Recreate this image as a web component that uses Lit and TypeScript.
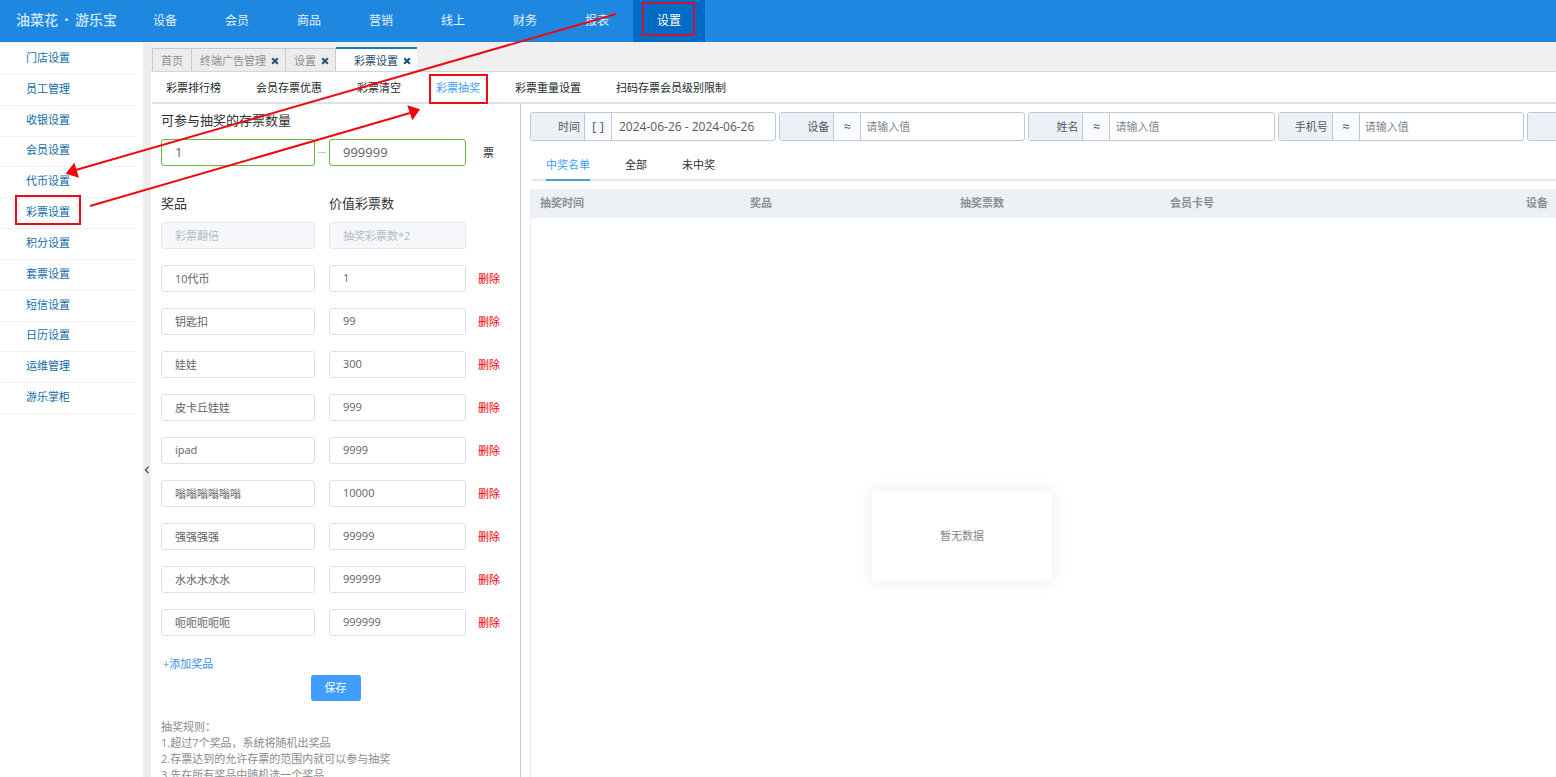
import { LitElement, html, css, svg, nothing } from "lit";
import { customElement, state } from "lit/decorators.js";
import { classMap } from "lit/directives/class-map.js";

const NAV = ["设备", "会员", "商品", "营销", "线上", "财务", "报表", "设置"];
const SIDE = [
  "门店设置", "员工管理", "收银设置", "会员设置", "代币设置", "彩票设置",
  "积分设置", "套票设置", "短信设置", "日历设置", "运维管理", "游乐掌柜",
];
const PAGE_TABS = ["首页", "终端广告管理", "设置", "彩票设置"];
const SUB_TABS = ["彩票排行榜", "会员存票优惠", "彩票清空", "彩票抽奖", "彩票重量设置", "扫码存票会员级别限制"];
const RESULT_TABS = ["中奖名单", "全部", "未中奖"];
const FILTERS = ["设备", "姓名", "手机号", ""];
const COLUMNS = ["抽奖时间", "奖品", "抽奖票数", "会员卡号", "设备"];
const RULES = [
  "1.超过7个奖品，系统将随机出奖品",
  "2.存票达到的允许存票的范围内就可以参与抽奖",
  "3.先在所有奖品中随机选一个奖品",
];

interface Prize {
  name: string;
  value: string;
  locked?: boolean;
}

const PRIZES: Prize[] = [
  { name: "彩票翻倍", value: "抽奖彩票数*2", locked: true },
  { name: "10代币", value: "1" },
  { name: "钥匙扣", value: "99" },
  { name: "娃娃", value: "300" },
  { name: "皮卡丘娃娃", value: "999" },
  { name: "ipad", value: "9999" },
  { name: "嗡嗡嗡嗡嗡嗡", value: "10000" },
  { name: "强强强强", value: "99999" },
  { name: "水水水水水", value: "999999" },
  { name: "呃呃呃呃呃", value: "999999" },
];

const reset = css`
  * {
    box-sizing: border-box;
  }
  button,
  input {
    font: inherit;
    color: inherit;
    margin: 0;
    padding: 0;
    border: 0;
    background: none;
    border-radius: 0;
    min-width: 0;
    outline: 0;
  }
  button {
    cursor: pointer;
    white-space: nowrap;
  }
  a {
    color: inherit;
    text-decoration: none;
  }
`;

@customElement("top-bar")
export class TopBar extends LitElement {
  static styles = [
    reset,
    css`
      :host {
        display: flex;
        height: 42px;
        background: #1e88e1;
        color: #e3f1fd;
        font-size: 12px;
        line-height: 41px;
      }
      .logo {
        width: 129px;
        padding-left: 16px;
        font-size: 14px;
        font-weight: 500;
        line-height: 40px;
        color: #d3e8fb;
        white-space: nowrap;
      }
      .dot {
        display: inline-block;
        width: 17px;
        text-align: center;
        font-weight: 800;
      }
      .nav {
        display: flex;
      }
      .item {
        width: 72px;
        text-align: center;
      }
      .current {
        background: #026bc6;
        color: #fff;
      }
    `,
  ];

  render() {
    return html`
      <div class="logo">油菜花<span class="dot">·</span>游乐宝</div>
      <nav class="nav">
        ${NAV.map(
          (n) => html`<a href="#" class=${classMap({ item: true, current: n === "设置" })}>${n}</a>`
        )}
      </nav>
    `;
  }
}

@customElement("side-menu")
export class SideMenu extends LitElement {
  static styles = [
    reset,
    css`
      :host {
        display: block;
        background: #fff;
        padding: 1px 7px 0 0;
      }
      .menu {
        display: grid;
        grid-auto-rows: 1fr;
        height: 370px;
      }
      .link {
        display: flex;
        align-items: center;
        padding: 0 0 2px 26px;
        border-bottom: 1px solid #f1f2f4;
        color: #116cab;
      }
    `,
  ];

  render() {
    return html`<nav class="menu">
      ${SIDE.map((s) => html`<a href="#" class="link">${s}</a>`)}
    </nav>`;
  }
}

@customElement("prize-form")
export class PrizeForm extends LitElement {
  @state() private prizes = PRIZES;

  static styles = [
    reset,
    css`
      :host {
        display: block;
        padding: 7px 10px 0;
        border-right: 1px solid #c6c8cc;
      }
      .title {
        font-size: 13px;
        line-height: 18px;
        color: #303133;
      }
      .row {
        display: grid;
        grid-template-columns: 154px 14px 137px 1fr;
        align-items: center;
      }
      .range {
        margin-top: 10px;
      }
      .dash {
        justify-self: center;
        width: 8px;
        height: 1px;
        background: #c8cacf;
      }
      .unit {
        padding-left: 17px;
        color: #303133;
      }
      .heads {
        margin-top: 28px;
      }
      .prizes {
        display: grid;
        gap: 16px;
        margin-top: 10px;
      }
      .box {
        width: 100%;
        height: 27px;
        padding: 0 13px 2px;
        border: 1px solid #dcdfe6;
        border-radius: 3px;
        background: #fff;
        color: #606266;
      }
      .ok {
        border-color: #67b83a;
        font-size: 13px;
      }
      .box:disabled {
        background: #f5f7fa;
        border-color: #e4e7ed;
        color: #b8bcc5;
      }
      .value {
        grid-column: 3;
      }
      .remove {
        justify-self: start;
        margin-left: 12px;
        color: #f00000;
      }
      .add {
        display: block;
        margin: 20px 0 0 2px;
        line-height: 16px;
        color: #3a8ee6;
      }
      .save {
        display: block;
        width: 50px;
        height: 26px;
        margin: 3px auto 0;
        border-radius: 3px;
        background: #409eff;
        color: #fff;
      }
      .rules {
        margin-top: 18px;
        line-height: 16px;
        color: #8b8b8b;
        white-space: nowrap;
      }
    `,
  ];

  private remove(p: Prize) {
    this.prizes = this.prizes.filter((x) => x !== p);
  }

  render() {
    return html`
      <div class="title">可参与抽奖的存票数量</div>
      <div class="row range">
        <input class="box ok" aria-label="最少票数" value="1" />
        <span class="dash"></span>
        <input class="box ok" aria-label="最多票数" value="999999" />
        <span class="unit">票</span>
      </div>
      <div class="row heads">
        <div class="title">奖品</div>
        <div class="title value">价值彩票数</div>
      </div>
      <div class="prizes">
        ${this.prizes.map(
          (p) => html`<div class="row">
            <input class="box" aria-label="奖品" .value=${p.name} ?disabled=${!!p.locked} />
            <input class="box value" aria-label="价值彩票数" .value=${p.value} ?disabled=${!!p.locked} />
            ${p.locked
              ? nothing
              : html`<button class="remove" @click=${() => this.remove(p)}>删除</button>`}
          </div>`
        )}
      </div>
      <button class="add">+添加奖品</button>
      <button class="save">保存</button>
      <div class="rules">
        <div>抽奖规则：</div>
        ${RULES.map((r) => html`<div>${r}</div>`)}
      </div>
    `;
  }
}

@customElement("draw-results")
export class DrawResults extends LitElement {
  static styles = [
    reset,
    css`
      :host {
        display: flex;
        flex-direction: column;
        min-width: 0;
        padding: 8px 0 0 9px;
        overflow: hidden;
      }
      .filters {
        display: grid;
        grid-auto-flow: column;
        grid-auto-columns: 24%;
        gap: 3px;
      }
      .field {
        display: grid;
        grid-template-columns: 54px 27px 1fr;
        height: 29px;
        line-height: 27px;
        border: 1px solid #bfc8d6;
        border-radius: 3px;
        overflow: hidden;
        color: #55585e;
      }
      .label {
        padding-right: 4px;
        text-align: right;
        background: #edf1f7;
        border-right: 1px solid #bfc8d6;
      }
      .op {
        font-size: 13px;
        line-height: 26px;
        text-align: center;
        background: #f9fafd;
        border-right: 1px solid #bfc8d6;
      }
      .entry {
        width: 100%;
        padding: 0 5px 1px;
      }
      .date {
        padding: 0 7px;
        font-size: 12px;
      }
      .entry::placeholder {
        color: #7c8798;
        opacity: 1;
      }
      .tabs {
        display: flex;
        gap: 35px;
        height: 32px;
        margin: 8px 0 0 2px;
        padding-left: 14px;
        border-bottom: 2px solid #e4e7ea;
        color: #303133;
      }
      .tab {
        height: 32px;
        padding-top: 2px;
        border-bottom: 2px solid transparent;
      }
      .on {
        color: #409eff;
        border-color: #5098d8;
      }
      .panel {
        flex: 1;
        margin-top: 8px;
        border-left: 1px solid #e8eaee;
      }
      .table {
        width: 100%;
        table-layout: fixed;
        border-collapse: collapse;
      }
      .narrow {
        width: 210px;
      }
      .last {
        width: 39px;
      }
      .head {
        height: 29px;
        padding: 0 0 2px 9px;
        background: #edf0f5;
        text-align: left;
        font-weight: 700;
        color: #8c9097;
        white-space: nowrap;
      }
      .empty {
        display: flex;
        align-items: center;
        justify-content: center;
        width: 180px;
        height: 90px;
        margin: 273px 0 0 341px;
        background: #fff;
        color: #868686;
        box-shadow: 0 0 16px rgba(0, 0, 0, 0.08);
      }
    `,
  ];

  render() {
    return html`
      <div class="filters">
        <div class="field">
          <label class="label" for="date">时间</label>
          <span class="op">[ ]</span>
          <input class="entry date" id="date" value="2024-06-26 - 2024-06-26" />
        </div>
        ${FILTERS.map(
          (f, i) => html`<div class="field">
            <label class="label" for="f${i}">${f}</label>
            <span class="op">≈</span>
            <input class="entry" id="f${i}" placeholder="请输入值" />
          </div>`
        )}
      </div>
      <div class="tabs">
        ${RESULT_TABS.map(
          (t, i) => html`<button class=${classMap({ tab: true, on: i === 0 })}>${t}</button>`
        )}
      </div>
      <div class="panel">
        <table class="table">
          <colgroup>
            <col class="narrow" /><col class="narrow" /><col class="narrow" /><col /><col class="last" />
          </colgroup>
          <thead>
            <tr>
              ${COLUMNS.map((c) => html`<th class="head">${c}</th>`)}
            </tr>
          </thead>
        </table>
        <div class="empty">暂无数据</div>
      </div>
    `;
  }
}

@customElement("app-root")
export class AppRoot extends LitElement {
  static styles = [
    reset,
    css`
      :host {
        display: flex;
        flex-direction: column;
        position: relative;
        height: 100vh;
        overflow: hidden;
        background: #fff;
        font-family: "Open Sans", "Noto Sans CJK SC", sans-serif;
        font-size: 11px;
        line-height: 16px;
      }
      .body {
        flex: 1;
        min-height: 0;
        display: grid;
        grid-template-columns: 143px 8px minmax(0, 1fr);
        padding-top: 1px;
        background: #f0f0f0;
      }
      .fold {
        display: flex;
        align-items: center;
        justify-content: center;
        padding-top: 120px;
        background: #eeeeee;
      }
      .main {
        display: flex;
        flex-direction: column;
        min-width: 0;
        min-height: 0;
        background: #fff;
      }
      .pages {
        display: flex;
        align-items: flex-end;
        flex: none;
        height: 29px;
        padding: 0 0 0 1px;
        background: #f0f0f0;
        border-bottom: 1px solid #d6d6d6;
      }
      .page {
        display: flex;
        align-items: center;
        gap: 5px;
        height: 23px;
        padding: 1px 6px 0 8px;
        border: 1px solid #cbc9c5;
        border-width: 1px 1px 0;
        background: #ececec;
        color: #909090;
      }
      .page:first-child {
        padding-right: 8px;
      }
      .page + .page {
        border-left: 0;
      }
      .open {
        height: 24px;
        padding-left: 18px;
        border-top: 2px solid #1a7bb0;
        border-right: 0;
        background: #fff;
        color: #24486c;
      }
      .close {
        display: flex;
      }
      .subs {
        display: flex;
        flex: none;
        gap: 35px;
        height: 32px;
        margin-left: 1px;
        padding-left: 14px;
        border-bottom: 2px solid #dfe2ea;
        color: #26282b;
      }
      .sub {
        height: 32px;
        padding-top: 1px;
        border-bottom: 2px solid transparent;
      }
      .picked {
        color: #409eff;
        border-color: #409eff;
      }
      .work {
        flex: 1;
        min-height: 0;
        display: grid;
        grid-template-columns: 370px minmax(0, 1fr);
      }
      .marks {
        position: absolute;
        top: 0;
        left: 0;
        pointer-events: none;
      }
    `,
  ];

  private cross() {
    return html`<svg width="8" height="8" viewBox="0 0 8 8" aria-hidden="true">
      <path d="M1.2 1.2 6.8 6.8M6.8 1.2 1.2 6.8" stroke="#24557f" stroke-width="2.2" />
    </svg>`;
  }

  private marks() {
    return svg`
      <g fill="none" stroke="#ee0a12" stroke-width="2">
        <rect x="643" y="3" width="51" height="32" stroke="#c8143a" />
        <rect x="430" y="75" width="57" height="28" />
        <rect x="16" y="196" width="64" height="28" />
        <path d="M616 14 74 170.500M90 206 410 113" />
      </g>
      <path fill="#f00505" d="M65.700 173.700 74.300 162.700 79 177.700ZM420 109.300 407.300 105.300 412.300 120.300Z" />
    `;
  }

  render() {
    return html`
      <top-bar></top-bar>
      <div class="body">
        <side-menu></side-menu>
        <button class="fold" aria-label="收起菜单">
          <svg width="6" height="8" viewBox="0 0 6 8">
            <path d="M4.500 .8 1.500 4 4.500 7.200" fill="none" stroke="#555" stroke-width="1.400" />
          </svg>
        </button>
        <main class="main">
          <div class="pages">
            ${PAGE_TABS.map(
              (p, i) => html`<div class=${classMap({ page: true, open: i === 3 })}>
                <a href="#">${p}</a>
                ${i ? html`<button class="close" aria-label="关闭">${this.cross()}</button>` : nothing}
              </div>`
            )}
          </div>
          <div class="subs">
            ${SUB_TABS.map(
              (s, i) => html`<button class=${classMap({ sub: true, picked: i === 3 })}>${s}</button>`
            )}
          </div>
          <div class="work">
            <prize-form></prize-form>
            <draw-results></draw-results>
          </div>
        </main>
      </div>
      <svg class="marks" width="720" height="240" aria-hidden="true">${this.marks()}</svg>
    `;
  }
}
